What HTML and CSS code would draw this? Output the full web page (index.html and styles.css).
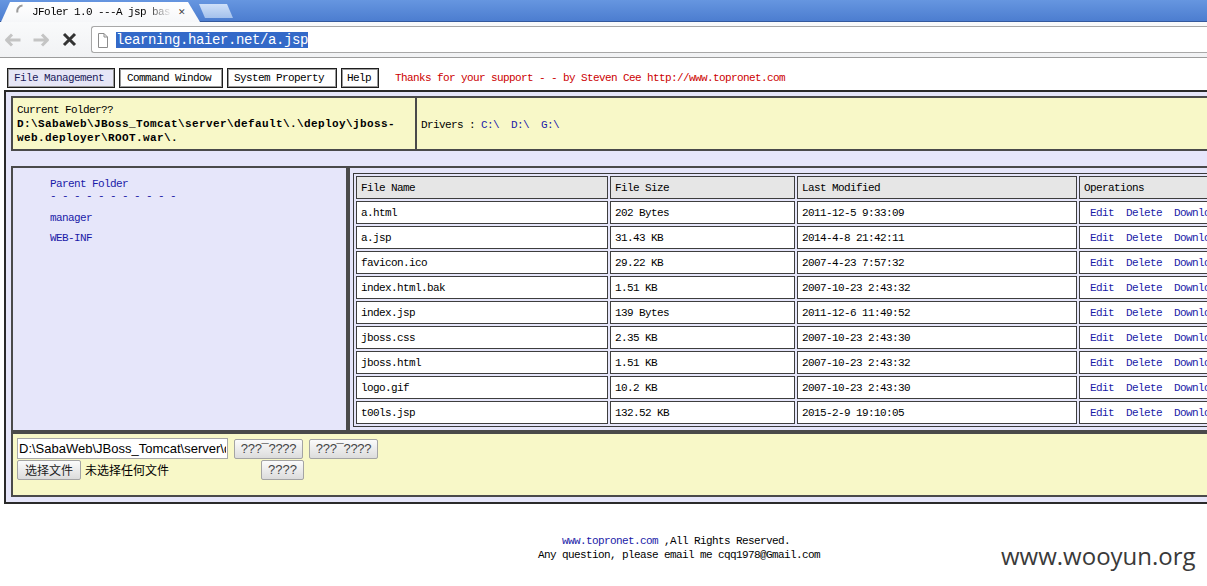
FILE: index.html
```html
<!DOCTYPE html>
<html>
<head>
<meta charset="utf-8">
<title>JFoler 1.0 ---A jsp based web folder management tool</title>
<link rel="stylesheet" href="styles.css">
</head>
<body>
<div class="chrome">
  <div class="tabstrip">
    <div class="tab">
      <svg class="throbber" width="12" height="14" viewBox="0 0 12 14"><path d="M6.5 1.5 A5.5 5.5 0 0 0 1.5 8.5" fill="none" stroke="#9a9a9a" stroke-width="2"/></svg>
      <span class="tab-title">JFoler 1.0 ---A jsp bas</span>
      <span class="tab-close">✕</span>
    </div>
    <div class="newtab"></div>
  </div>
  <div class="toolbar">
    <svg class="nav-ico back" width="18" height="14" viewBox="0 0 18 14"><path d="M8 1.5 L2.5 7 L8 12.5 M2.5 7 H16.5" fill="none" stroke="#c4c4c4" stroke-width="3" stroke-linejoin="round"/></svg>
    <svg class="nav-ico fwd" width="18" height="14" viewBox="0 0 18 14"><path d="M10 1.5 L15.5 7 L10 12.5 M15.5 7 H1.5" fill="none" stroke="#c4c4c4" stroke-width="3" stroke-linejoin="round"/></svg>
    <svg class="nav-ico stop" width="15" height="15" viewBox="0 0 15 15"><path d="M2 2 L13 13 M13 2 L2 13" fill="none" stroke="#333" stroke-width="3"/></svg>
    <div class="omnibox">
      <svg class="doc" width="10" height="15" viewBox="0 0 10 15"><path d="M0.5 0.5 H6 L9.5 4 V14.5 H0.5 Z" fill="#fff" stroke="#8c8c8c"/><path d="M6 0.5 V4 H9.5" fill="none" stroke="#8c8c8c"/></svg>
      <span class="url">learning.haier.net/a.jsp</span>
    </div>
  </div>
</div>

<div class="page">
  <div class="nav">
    <span class="navbtn active w-fm">File Management</span>
    <span class="navbtn w-cw">Command Window</span>
    <span class="navbtn w-sp">System Property</span>
    <span class="navbtn w-help">Help</span>
    <span class="thanks">Thanks for your support - - by Steven Cee http://www.topronet.com</span>
  </div>

  <div class="frame">
    <div class="info">
      <div class="cur">
        <div>Current Folder??</div>
        <div class="path">D:\SabaWeb\JBoss_Tomcat\server\default\.\deploy\jboss-<br>web.deployer\ROOT.war\.</div>
      </div>
      <div class="drivers">Drivers : <a class="lnk">C:\</a>&nbsp;&nbsp;<a class="lnk">D:\</a>&nbsp;&nbsp;<a class="lnk">G:\</a></div>
    </div>

    <div class="main">
      <div class="tree">
        <div class="t-parent lnk">Parent Folder</div>
        <div class="t-dash lnk">- - - - - - - - - - -</div>
        <div class="t-dir first lnk">manager</div>
        <div class="t-dir lnk">WEB-INF</div>
      </div>
      <div class="files">
        <table class="ftable">
          <thead>
            <tr><th class="c-name">File Name</th><th class="c-size">File Size</th><th class="c-date">Last Modified</th><th class="c-ops">Operations</th></tr>
          </thead>
          <tbody>
            <tr><td>a.html</td><td>202 Bytes</td><td>2011-12-5 9:33:09</td><td class="ops"><a>Edit</a><a>Delete</a><a>Download</a><a>Rename</a></td></tr>
            <tr><td>a.jsp</td><td>31.43 KB</td><td>2014-4-8 21:42:11</td><td class="ops"><a>Edit</a><a>Delete</a><a>Download</a><a>Rename</a></td></tr>
            <tr><td>favicon.ico</td><td>29.22 KB</td><td>2007-4-23 7:57:32</td><td class="ops"><a>Edit</a><a>Delete</a><a>Download</a><a>Rename</a></td></tr>
            <tr><td>index.html.bak</td><td>1.51 KB</td><td>2007-10-23 2:43:32</td><td class="ops"><a>Edit</a><a>Delete</a><a>Download</a><a>Rename</a></td></tr>
            <tr><td>index.jsp</td><td>139 Bytes</td><td>2011-12-6 11:49:52</td><td class="ops"><a>Edit</a><a>Delete</a><a>Download</a><a>Rename</a></td></tr>
            <tr><td>jboss.css</td><td>2.35 KB</td><td>2007-10-23 2:43:30</td><td class="ops"><a>Edit</a><a>Delete</a><a>Download</a><a>Rename</a></td></tr>
            <tr><td>jboss.html</td><td>1.51 KB</td><td>2007-10-23 2:43:32</td><td class="ops"><a>Edit</a><a>Delete</a><a>Download</a><a>Rename</a></td></tr>
            <tr><td>logo.gif</td><td>10.2 KB</td><td>2007-10-23 2:43:30</td><td class="ops"><a>Edit</a><a>Delete</a><a>Download</a><a>Rename</a></td></tr>
            <tr><td>t00ls.jsp</td><td>132.52 KB</td><td>2015-2-9 19:10:05</td><td class="ops"><a>Edit</a><a>Delete</a><a>Download</a><a>Rename</a></td></tr>
          </tbody>
        </table>
      </div>
    </div>

    <div class="upload">
      <div class="up-row">
        <input class="pathbox" type="text" value="D:\SabaWeb\JBoss_Tomcat\server\default\.\deploy\jboss-web.deployer\ROOT.war\.">
        <button class="btn wide">???¯????</button>
        <button class="btn wide">???¯????</button>
      </div>
      <div class="up-row">
        <button class="btn cjk">选择文件</button>
        <span class="nofile">未选择任何文件</span>
        <button class="btn">????</button>
      </div>
    </div>
  </div>

  <div class="footer">
    <div><a class="lnk">www.topronet.com</a> ,All Rights Reserved.&nbsp;</div>
    <div>Any question, please email me cqq1978@Gmail.com</div>
  </div>
</div>

<div class="watermark">www.wooyun.org</div>
</body>
</html>
```

FILE: styles.css
```css
* { box-sizing: border-box; }

html, body {
  margin: 0;
  padding: 0;
  overflow: hidden;
}

body {
  background: #fff;
  color: #000;
  font-family: "Liberation Mono", "Noto Sans CJK SC", monospace;
  font-size: 11px;
  letter-spacing: -0.6px;
  position: relative;
  width: 1207px;
  height: 586px;
}

/* ---------- browser chrome ---------- */
.chrome {
  width: 1207px;
  letter-spacing: 0;
}

.tabstrip {
  height: 22px;
  background: linear-gradient(#6696e0, #4b7ccf);
  box-shadow: inset 0 -1px 0 #35599c;
  display: flex;
  align-items: flex-end;
  padding-left: 1px;
}

.tab {
  width: 199px;
  height: 20px;
  background: linear-gradient(#ffffff, #f6f7f9);
  clip-path: polygon(0 100%, 9px 0, 187px 0, 199px 100%);
  display: flex;
  align-items: center;
  padding-left: 15px;
}

.throbber {
  margin-top: -2px;
}

.tab-title {
  margin-left: 4px;
  width: 140px;
  white-space: nowrap;
  overflow: hidden;
  font-family: "Liberation Mono", monospace;
  font-size: 11px;
  letter-spacing: -0.6px;
  color: #000;
  -webkit-mask-image: linear-gradient(90deg, #000 80%, transparent 100%);
  mask-image: linear-gradient(90deg, #000 80%, transparent 100%);
}

.tab-close {
  margin-left: 6px;
  font-family: "DejaVu Sans", sans-serif;
  font-size: 9px;
  font-weight: bold;
  color: #444;
}

.newtab {
  width: 34px;
  height: 14px;
  margin: 0 0 4px -1px;
  background: linear-gradient(#cfe0f8, #a4c1ec);
  clip-path: polygon(0 0, 28px 0, 34px 100%, 6px 100%);
}

.toolbar {
  height: 36px;
  background: linear-gradient(#f9fafb, #f1f2f4);
  border-bottom: 1px solid #9c9c9c;
  display: flex;
  align-items: flex-start;
  position: relative;
}

.nav-ico { margin-top: 11px; }
.back { margin-left: 4px; }
.fwd { margin-left: 10px; }
.stop { margin-left: 12px; margin-top: 10px; }

.omnibox {
  margin-left: 14px;
  margin-top: 4px;
  flex: 1;
  height: 27px;
  background: #fff;
  border: 1px solid #a8a8a8;
  border-right: none;
  border-radius: 3px 0 0 3px;
  display: flex;
  align-items: center;
  padding-left: 6px;
}

.doc { margin-top: 1px; }

.url {
  margin-left: 8px;
  background: #3369c8;
  color: #fff;
  font-family: "Liberation Mono", monospace;
  font-size: 14px;
  letter-spacing: -0.4px;
  line-height: 16px;
  height: 16px;
  padding-right: 0.4px;
}

/* ---------- page ---------- */
.page {
  width: 1358px;
  padding-top: 10px;
}

.lnk, a {
  color: #1a1aa8;
  text-decoration: none;
}

.nav {
  display: flex;
  align-items: center;
  gap: 4px;
  margin-left: 7px;
  height: 20px;
}

.navbtn {
  height: 20px;
  line-height: 19px;
  border: 1px solid #1e1e1e;
  box-shadow: inset 0 0 0 1px #9a9a9a;
  background: #fff;
  padding-left: 6px;
  white-space: nowrap;
}
.navbtn.active { background: #e6e6f6; color: #1c1c5c; }
.w-fm { width: 108px; }
.w-cw { width: 104px; padding-left: 7px; }
.w-sp { width: 110px; }
.w-help { width: 38px; padding-left: 5px; }

.thanks {
  margin-left: 12px;
  color: #cc0000;
  white-space: nowrap;
}

.frame {
  margin: 2px 0 0 4px;
  border: 2px solid #2a2a2a;
  border-right: none;
  background: #e6e6fa;
  padding: 4px 0 5px 5px;
}

.info {
  display: flex;
  height: 55px;
  background: #f8f8c8;
  border: 2px solid #4a4a4a;
}

.cur {
  width: 404px;
  border-right: 2px solid #4a4a4a;
  padding: 5px 4px 0 4px;
  line-height: 14px;
  white-space: nowrap;
}

.path {
  font-weight: bold;
  letter-spacing: 0.4px;
}

.drivers {
  display: flex;
  align-items: center;
  padding: 2px 0 0 4px;
  white-space: pre;
}

.main {
  display: flex;
  height: 266px;
  margin-top: 15px;
}

.tree {
  width: 337px;
  border: 2px solid #4a4a4a;
  background: #e6e6fa;
  padding: 9px 0 0 37px;
  line-height: 14px;
}
.t-dash { line-height: 10px; }
.t-dir.first { margin-top: 10px; }
.t-dir { margin-top: 6px; }

.files {
  flex: 1;
  border: 2px solid #4a4a4a;
  border-right: none;
  background: #e6e6fa;
  padding: 5px 0 0 3px;
}

.ftable {
  border: 1px solid #3a3a3a;
  border-spacing: 2px;
  table-layout: fixed;
  width: 993px;
  font-size: 11px;
}

.ftable th, .ftable td {
  border: 1px solid #3e3e3e;
  height: 23px;
  padding: 0 0 0 4px;
  text-align: left;
  font-weight: normal;
  white-space: nowrap;
  overflow: hidden;
  background: #fff;
  vertical-align: middle;
}
.ftable th { background: #e6e6e6; }

.c-name { width: 252px; }
.c-size { width: 185px; }
.c-date { width: 280px; }
.c-ops { width: 264px; }

.ftable td.ops { padding-left: 10px; }
.ops a { margin-right: 12px; }

.upload {
  height: 65px;
  background: #f8f8c8;
  border: 2px solid #4a4a4a;
  border-right: none;
  padding: 4px 0 0 4px;
  font-family: "Liberation Sans", Arial, sans-serif;
  letter-spacing: 0;
}

.up-row {
  display: flex;
  align-items: center;
  gap: 6px;
  height: 21px;
}
.up-row + .up-row { gap: 4px; }

.pathbox {
  width: 211px;
  height: 21px;
  border: 1px solid #a9a9a9;
  padding: 0 1px;
  font-family: "Liberation Sans", Arial, sans-serif;
  font-size: 13px;
  color: #000;
  background: #fff;
  margin: 0;
  outline: none;
}

.btn {
  height: 20px;
  margin: 0;
  padding: 0 6px;
  border: 1px solid #a4a4a4;
  border-radius: 2px;
  background: linear-gradient(#fbfbfb, #dcdcdc);
  font-family: "Liberation Sans", Arial, sans-serif;
  font-size: 13px;
  color: #444;
  line-height: 18px;
}
.btn.wide {
  width: 69px;
  padding: 0;
  letter-spacing: -0.3px;
}
.btn.cjk {
  font-family: "Noto Sans CJK SC", sans-serif;
  font-size: 12px;
  color: #222;
  width: 64px;
  padding: 0;
}

.nofile {
  width: 172px;
  font-family: "Noto Sans CJK SC", sans-serif;
  font-size: 12px;
  color: #000;
}

.footer {
  margin-top: 30px;
  text-align: center;
  line-height: 14px;
}

.watermark {
  position: absolute;
  left: 1001px;
  top: 544px;
  font-family: "Open Sans", sans-serif;
  font-size: 24px;
  line-height: 24px;
  letter-spacing: 0;
  color: #3a3a3a;
  text-shadow: 0 0 2px #fff, 0 0 2px #fff;
  white-space: nowrap;
}
```
